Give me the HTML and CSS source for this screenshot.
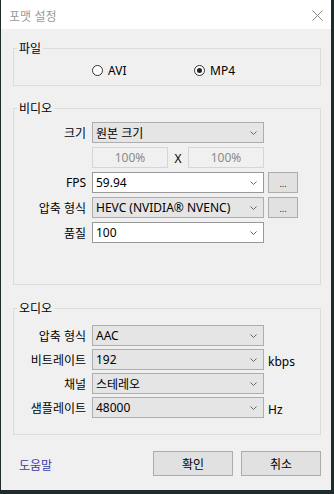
FILE: index.html
```html
<!DOCTYPE html>
<html lang="ko">
<head>
  <meta charset="UTF-8">
  <title>포맷 설정</title>
  <meta name="viewport" content="width=device-width, initial-scale=1.0">
  <link rel="stylesheet" href="styles.css">
</head>
<body>
  <div class="window">
    <div class="titlebar">
      <span class="title">포맷 설정</span>
      <svg class="close" width="11" height="11" viewBox="0 0 11 11">
        <path d="M0.5 0.5 L10.5 10.5 M10.5 0.5 L0.5 10.5" stroke="#8a8a8a" stroke-width="1" fill="none"/>
      </svg>
    </div>

    <div class="content">
      <!-- 파일 -->
      <fieldset class="group">
        <legend>파일</legend>
        <div class="radios">
          <label class="radio"><span class="dot"></span>AVI</label>
          <label class="radio checked"><span class="dot"></span>MP4</label>
        </div>
      </fieldset>

      <!-- 비디오 -->
      <fieldset class="group group-video">
        <legend>비디오</legend>
        <div class="rows">
          <div class="row">
            <span class="label">크기</span>
            <div class="combo"><span>원본 크기</span><svg class="chev" width="7" height="4" viewBox="0 0 7 4"><polyline points="0.5,0.5 3.5,3.5 6.5,0.5" fill="none" stroke="#666"/></svg></div>
          </div>
          <div class="row">
            <span class="label"></span>
            <div class="size-pair">
              <div class="pct">100%</div>
              <span class="times">X</span>
              <div class="pct">100%</div>
            </div>
          </div>
          <div class="row">
            <span class="label">FPS</span>
            <div class="combo edit"><span>59.94</span><svg class="chev" width="7" height="4" viewBox="0 0 7 4"><polyline points="0.5,0.5 3.5,3.5 6.5,0.5" fill="none" stroke="#666"/></svg></div>
            <button class="dots">...</button>
          </div>
          <div class="row">
            <span class="label">압축 형식</span>
            <div class="combo"><span>HEVC (NVIDIA® NVENC)</span><svg class="chev" width="7" height="4" viewBox="0 0 7 4"><polyline points="0.5,0.5 3.5,3.5 6.5,0.5" fill="none" stroke="#666"/></svg></div>
            <button class="dots">...</button>
          </div>
          <div class="row">
            <span class="label">품질</span>
            <div class="combo edit"><span>100</span><svg class="chev" width="7" height="4" viewBox="0 0 7 4"><polyline points="0.5,0.5 3.5,3.5 6.5,0.5" fill="none" stroke="#666"/></svg></div>
          </div>
        </div>
      </fieldset>

      <!-- 오디오 -->
      <fieldset class="group group-audio">
        <legend>오디오</legend>
        <div class="rows">
          <div class="row">
            <span class="label">압축 형식</span>
            <div class="combo"><span>AAC</span><svg class="chev" width="7" height="4" viewBox="0 0 7 4"><polyline points="0.5,0.5 3.5,3.5 6.5,0.5" fill="none" stroke="#666"/></svg></div>
          </div>
          <div class="row">
            <span class="label">비트레이트</span>
            <div class="combo"><span>192</span><svg class="chev" width="7" height="4" viewBox="0 0 7 4"><polyline points="0.5,0.5 3.5,3.5 6.5,0.5" fill="none" stroke="#666"/></svg></div>
            <span class="unit">kbps</span>
          </div>
          <div class="row">
            <span class="label">채널</span>
            <div class="combo"><span>스테레오</span><svg class="chev" width="7" height="4" viewBox="0 0 7 4"><polyline points="0.5,0.5 3.5,3.5 6.5,0.5" fill="none" stroke="#666"/></svg></div>
          </div>
          <div class="row">
            <span class="label">샘플레이트</span>
            <div class="combo"><span>48000</span><svg class="chev" width="7" height="4" viewBox="0 0 7 4"><polyline points="0.5,0.5 3.5,3.5 6.5,0.5" fill="none" stroke="#666"/></svg></div>
            <span class="unit">Hz</span>
          </div>
        </div>
      </fieldset>

      <div class="footer">
        <a class="help" href="#">도움말</a>
        <button class="btn">확인</button>
        <button class="btn">취소</button>
      </div>
    </div>
  </div>
</body>
</html>
```

FILE: styles.css
```css
* {
  box-sizing: border-box;
}

body {
  margin: 0;
  background: #1f2b2b;
  font-family: "Noto Sans", "Noto Sans CJK KR", sans-serif;
  font-size: 12px;
  color: #000;
}

.window {
  margin-left: 1px;
  width: 330px;
  height: 490px;
  background: #f0f0f0;
}

.titlebar {
  height: 29px;
  background: #fff;
  display: flex;
  align-items: center;
  justify-content: space-between;
  padding: 0 8px 0 8px;
}

.title {
  color: #999;
  font-family: "Noto Sans CJK KR", sans-serif;
  margin-top: 2px;
}

.close {
  margin-top: 2px;
}

.content {
  padding: 12px 0 0 12px;
}

.group {
  width: 308px;
  min-width: 0;
  margin: 0;
  padding: 0;
  border: 1px solid #dcdcdc;
}

.group legend {
  margin-left: 3px;
  padding: 0 2px;
  line-height: 14px;
  font-family: "Noto Sans CJK KR", sans-serif;
}

.group-video {
  margin-top: 15px;
}

.group-audio {
  margin-top: 16px;
}

/* radios */
.radios {
  display: flex;
  padding: 8px 0 8px 78px;
}

.radio {
  display: flex;
  align-items: center;
  height: 14px;
  width: 102px;
}

.dot {
  width: 11px;
  height: 11px;
  border: 1px solid #333;
  border-radius: 50%;
  background: #fff;
  margin-right: 5px;
  display: flex;
  align-items: center;
  justify-content: center;
}

.radio.checked .dot::after {
  content: "";
  width: 5px;
  height: 5px;
  border-radius: 50%;
  background: #222;
}

/* form rows */
.rows {
  display: flex;
  flex-direction: column;
  gap: 4px;
  padding: 7px 0 41px 0;
}

.group-audio .rows {
  gap: 3px;
  padding: 10px 0 16px 0;
}

.row {
  display: flex;
  align-items: center;
  height: 21px;
}

.label {
  width: 72px;
  margin-right: 6px;
  text-align: right;
  font-family: "Noto Sans", "Noto Sans CJK KR", sans-serif;
}

.combo {
  width: 172px;
  height: 21px;
  display: flex;
  align-items: center;
  padding-left: 3px;
  border: 1px solid #adadad;
  background: #e5e5e5;
  white-space: nowrap;
}

.combo.edit {
  background: #fff;
  border-color: #999;
}

.chev {
  margin-left: auto;
  margin-right: 6px;
}

.size-pair {
  display: flex;
  align-items: center;
  width: 172px;
}

.pct {
  width: 76px;
  height: 21px;
  line-height: 19px;
  text-align: center;
  color: #8a8a8a;
  border: 1px solid #d5d5d5;
}

.times {
  width: 20px;
  text-align: center;
  padding-top: 2px;
}

.dots {
  width: 30px;
  height: 21px;
  margin-left: 4px;
  padding: 0 0 4px 0;
  border: 1px solid #adadad;
  background: #e1e1e1;
  font-family: "Noto Sans", sans-serif;
  font-size: 9px;
  line-height: 1;
  display: flex;
  align-items: flex-end;
  justify-content: center;
  color: #222;
}

.unit {
  margin-left: 4px;
  padding-top: 3px;
}

/* footer */
.footer {
  width: 308px;
  margin-top: 16px;
  display: flex;
  align-items: center;
  gap: 8px;
}

.help {
  margin-left: 6px;
  margin-right: auto;
  color: #3b3bab;
  text-decoration: none;
  font-family: "Noto Sans CJK KR", sans-serif;
  padding-top: 1px;
}

.btn {
  width: 80px;
  height: 25px;
  border: 1px solid #adadad;
  background: #e1e1e1;
  font-family: "Noto Sans CJK KR", sans-serif;
  font-size: 12px;
  color: #000;
  padding: 0;
}
```
